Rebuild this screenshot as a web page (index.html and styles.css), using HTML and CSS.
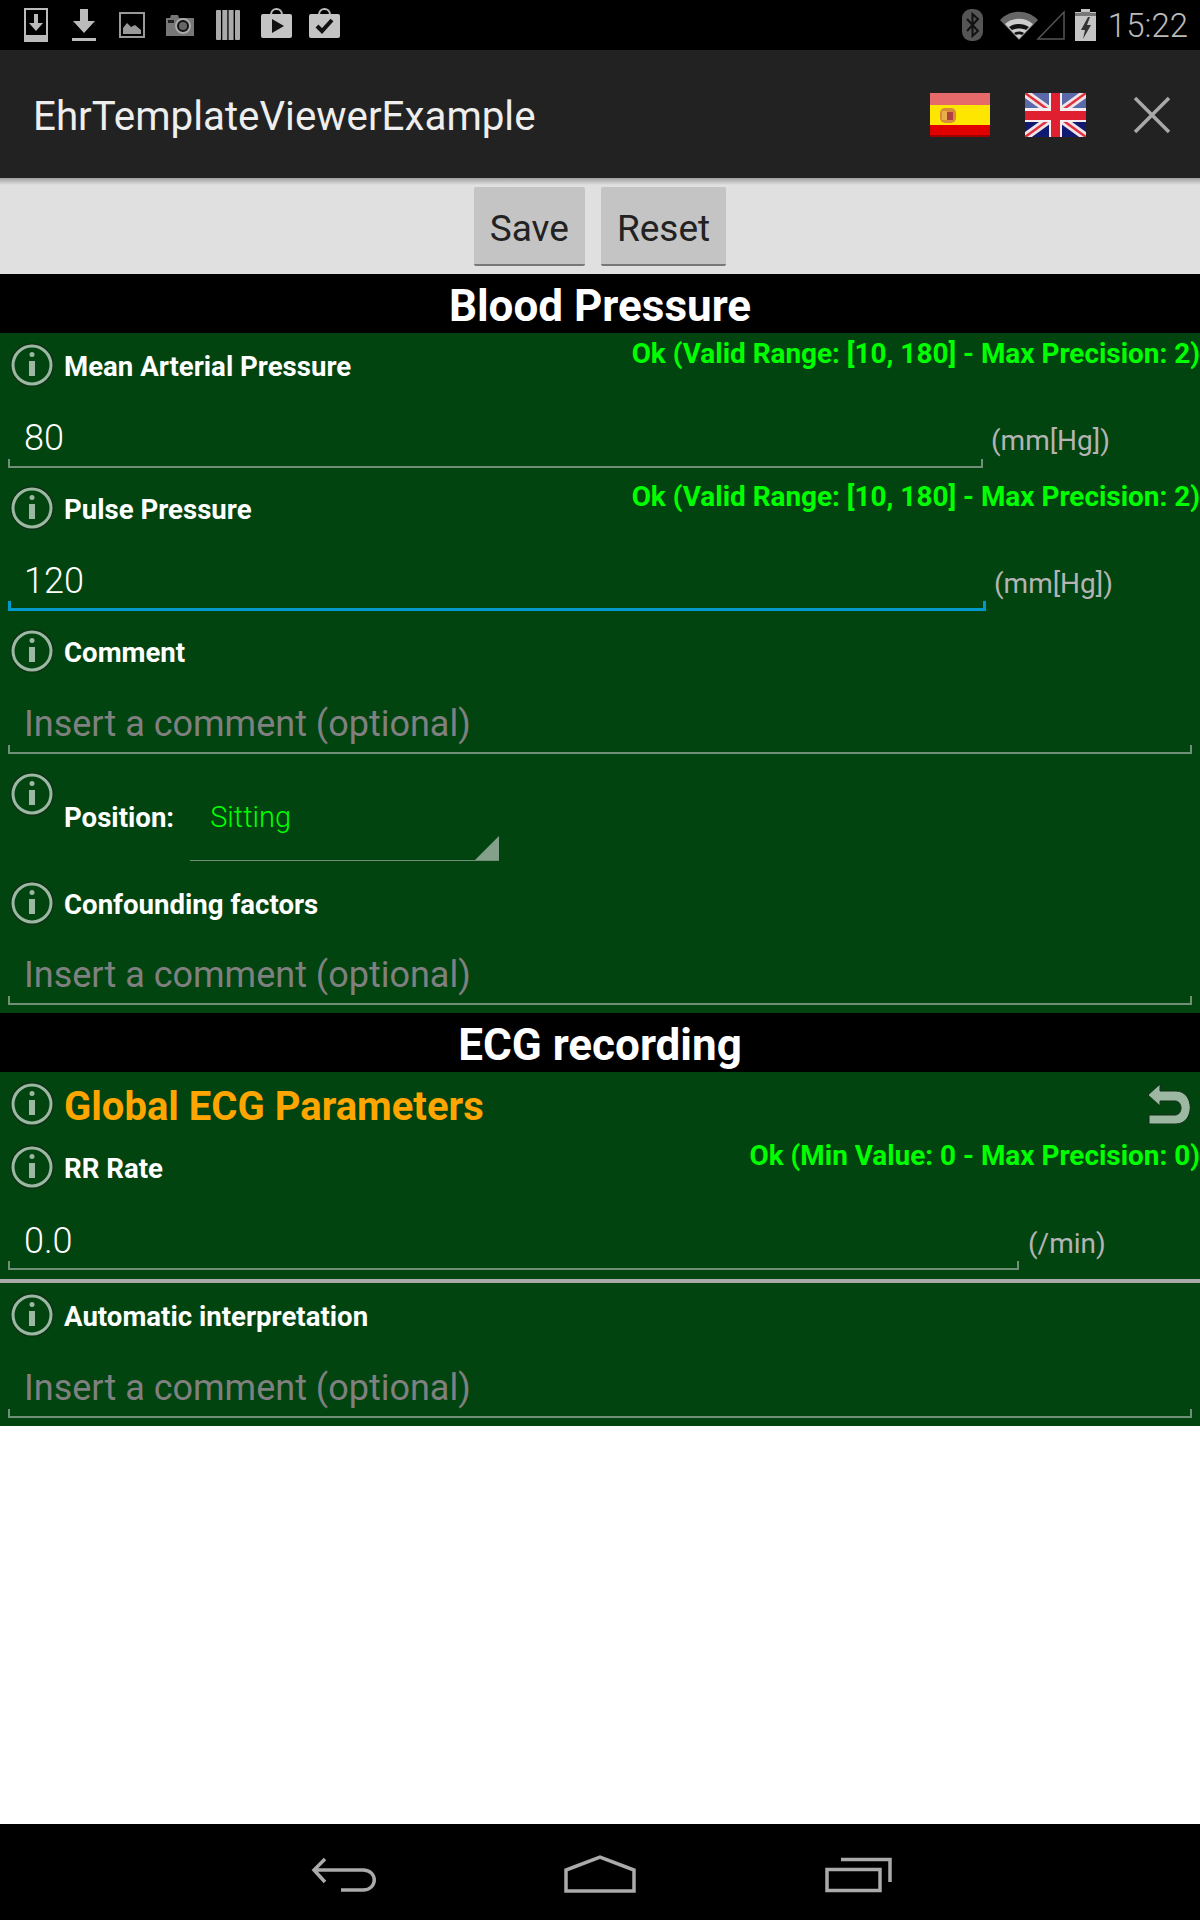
FILE: index.html
```html
<!DOCTYPE html>
<html lang="en">
<head>
  <meta charset="UTF-8" />
  <meta name="viewport" content="width=device-width, initial-scale=1.0"/>
  <title>EhrTemplateViewerExample</title>
  <link rel="stylesheet" href="styles.css">
</head>
<body>
  <svg class="defs" width="0" height="0">
    <symbol id="info" viewBox="0 0 44 44">
      <circle cx="22" cy="22" r="20.5" fill="none" stroke="#0f2f14" stroke-width="2.5"/>
      <circle cx="22" cy="22" r="19" fill="none" stroke="#9cb8a2" stroke-width="3"/>
      <circle cx="22" cy="11.500" r="2.500" fill="#9cb8a2"/>
      <rect x="19" y="18" width="6" height="15" fill="#9cb8a2"/>
    </symbol>
  </svg>

  <!-- status bar -->
  <div class="statusbar">
    <div class="status-icons">
      <svg width="24" height="34" viewBox="0 0 24 34">
        <path d="M1 1h22v32H1z" fill="none" stroke="#bbb" stroke-width="2"/>
        <rect x="1" y="27" width="22" height="6" fill="#bbb"/>
        <path d="M10 6h4v9h5l-7 8-7-8h5z" fill="#bbb"/>
      </svg>
      <svg width="24" height="32" viewBox="0 0 24 32">
        <path d="M8 0h8v12h7L12 24 1 12h7z" fill="#bbb"/>
        <rect y="29" width="24" height="3" fill="#bbb"/>
      </svg>
      <svg width="26" height="26" viewBox="0 0 26 26">
        <rect x="1" y="1" width="24" height="24" fill="none" stroke="#999" stroke-width="2"/>
        <path d="M4 22v-6l4-5 4 4 4-2 6 5v4z" fill="#999"/>
      </svg>
      <svg width="30" height="24" viewBox="0 0 30 24">
        <path d="M1 5h4l1-3h7l1 3h15v18H1z" fill="#777"/>
        <circle cx="18" cy="13" r="7" fill="#111" stroke="#aaa" stroke-width="2"/>
        <circle cx="18" cy="13" r="4" fill="#666"/>
        <rect x="3" y="7" width="6" height="3" fill="#222"/>
      </svg>
      <svg width="24" height="30" viewBox="0 0 24 30">
        <rect width="5" height="30" rx="1" fill="#aaa"/>
        <rect x="6.300" width="5" height="30" fill="#aaa"/>
        <rect x="12.600" width="5" height="30" fill="#aaa"/>
        <rect x="19" width="5" height="30" rx="1" fill="#aaa"/>
      </svg>
      <svg class="st-store" width="31" height="30" viewBox="0 0 31 30">
        <path d="M10 7c0-8 11-8 11 0" fill="none" stroke="#bbb" stroke-width="2"/>
        <rect y="6" width="31" height="24" rx="2" fill="#c4c4c4"/>
        <path d="M11 11l12 7-12 7z" fill="#111"/>
      </svg>
      <svg class="st-store" width="31" height="30" viewBox="0 0 31 30">
        <path d="M10 7c0-8 11-8 11 0" fill="none" stroke="#bbb" stroke-width="2"/>
        <rect y="6" width="31" height="24" rx="2" fill="#c4c4c4"/>
        <path d="M8 18l5 5 10-11" fill="none" stroke="#111" stroke-width="4"/>
      </svg>
    </div>
    <div class="status-right">
      <svg class="st-bt" width="21" height="32" viewBox="0 0 21 32">
        <rect width="21" height="32" rx="9" fill="#555"/>
        <path d="M5 10l11 12-5.500 5V5L16 10 5 22" fill="none" stroke="#111" stroke-width="2"/>
      </svg>
      <svg class="st-wifi" width="38" height="29" viewBox="0 0 38 29">
        <path d="M0 9C10-2 28-2 38 9L19 29z" fill="#666"/>
        <path d="M5 13c8-7 20-7 28 0L19 28z" fill="#ccc"/>
        <path d="M9 16c6-4 14-4 20 0l-3 3c-4-2-10-2-14 0zM14 22c3-2 7-2 10 0l-2 2c-2-1-4-1-6 0z" fill="#111"/>
      </svg>
      <svg class="st-signal" width="30" height="30" viewBox="0 0 30 30">
        <path d="M28 2v27H2z" fill="none" stroke="#555" stroke-width="1.500"/>
      </svg>
      <svg class="st-batt" width="21" height="32" viewBox="0 0 21 32">
        <path d="M6 0h9v3h6v29H0V3h6z" fill="#c4c4c4"/>
        <path d="M6 3h9v1h6v3H0V4h6z" fill="#777"/>
        <path d="M13 8l-7 13h4l-2 9 8-14h-4l3-8z" fill="#333"/>
      </svg>
      <span class="clock">15:22</span>
    </div>
  </div>

  <!-- action bar -->
  <div class="actionbar">
    <div class="app-title">EhrTemplateViewerExample</div>
    <div class="actions">
      <svg class="flag-es" width="60" height="44" viewBox="0 0 60 44">
        <rect width="60" height="44" fill="#e00000"/>
        <rect width="60" height="12" fill="#e66a6a"/>
        <rect y="12" width="60" height="20" fill="#ffe600"/>
        <rect x="10" y="15" width="16" height="15" rx="5" fill="#d98a3a"/>
        <rect x="12" y="18" width="5" height="9" fill="#e8b04a"/>
        <rect x="17" y="19" width="6" height="8" fill="#b04040"/>
        <rect y="42" width="60" height="2" fill="#a00000"/>
      </svg>
      <svg class="flag-uk" width="61" height="44" viewBox="0 0 61 44">
        <rect width="61" height="44" fill="#5a6aa8"/>
        <rect y="22" width="61" height="22" fill="#101a70"/>
        <path d="M0 0L61 44M61 0L0 44" stroke="#f0e4e8" stroke-width="8"/>
        <path d="M0 0L61 44M61 0L0 44" stroke="#e0303c" stroke-width="2.500"/>
        <rect x="24" width="13" height="44" fill="#f4eef0"/>
        <rect y="15" width="61" height="14" fill="#f4eef0"/>
        <rect x="26" width="9" height="44" fill="#e02030"/>
        <rect y="18" width="61" height="9" fill="#e02030"/>
      </svg>
      <svg class="close" width="38" height="38" viewBox="0 0 38 38">
        <path d="M2 2l34 34M36 2L2 36" stroke="#a8a8a8" stroke-width="3.500"/>
      </svg>
    </div>
  </div>

  <div class="toolbar">
    <button class="btn">Save</button>
    <button class="btn">Reset</button>
  </div>

  <div class="section-title">Blood Pressure</div>
  <div class="section">
    <div class="field">
      <div class="head">
        <svg class="info"><use href="#info"/></svg>
        <span class="label">Mean Arterial Pressure</span>
        <span class="status">Ok (Valid Range: [10, 180] - Max Precision: 2)</span>
      </div>
      <div class="input-row">
        <div class="input input-mean">80</div>
        <span class="unit">(mm[Hg])</span>
      </div>
    </div>
    <div class="field">
      <div class="head">
        <svg class="info"><use href="#info"/></svg>
        <span class="label">Pulse Pressure</span>
        <span class="status">Ok (Valid Range: [10, 180] - Max Precision: 2)</span>
      </div>
      <div class="input-row">
        <div class="input input-focus">120</div>
        <span class="unit">(mm[Hg])</span>
      </div>
    </div>
    <div class="field field-comment">
      <div class="head">
        <svg class="info"><use href="#info"/></svg>
        <span class="label">Comment</span>
      </div>
      <div class="input-row">
        <div class="input placeholder">Insert a comment (optional)</div>
      </div>
    </div>
    <div class="position-row">
      <svg class="info"><use href="#info"/></svg>
      <span class="label">Position:</span>
      <div class="spinner">Sitting</div>
    </div>
    <div class="field">
      <div class="head">
        <svg class="info"><use href="#info"/></svg>
        <span class="label">Confounding factors</span>
      </div>
      <div class="input-row">
        <div class="input placeholder input-short">Insert a comment (optional)</div>
      </div>
    </div>
  </div>

  <div class="section-title">ECG recording</div>
  <div class="section section-ecg">
    <div class="group-head">
      <svg class="info"><use href="#info"/></svg>
      <span class="group-title">Global ECG Parameters</span>
      <svg class="undo" width="44" height="40" viewBox="0 0 44 40">
        <path d="M1 11L13 0v7h16c19 0 19 33 0 33H2v-9h26c8 0 8-14 0-14H13v5z" fill="#9cb8a2" stroke="#0f2f14" stroke-width="1"/>
      </svg>
    </div>
    <div class="field field-rr">
      <div class="head">
        <svg class="info"><use href="#info"/></svg>
        <span class="label">RR Rate</span>
        <span class="status">Ok (Min Value: 0 - Max Precision: 0)</span>
      </div>
      <div class="input-row">
        <div class="input input-rr">0.0</div>
        <span class="unit">(/min)</span>
      </div>
    </div>
    <div class="divider"></div>
    <div class="field">
      <div class="head">
        <svg class="info"><use href="#info"/></svg>
        <span class="label">Automatic interpretation</span>
      </div>
      <div class="input-row">
        <div class="input placeholder">Insert a comment (optional)</div>
      </div>
    </div>
  </div>

  <div class="blank"></div>

  <!-- nav bar -->
  <div class="navbar">
    <svg width="66" height="36" viewBox="0 0 66 36">
      <path d="M14 2L3 13l11 12M3 13h49c15 0 15 20 0 20H30" fill="none" stroke="#aaa" stroke-width="3.500"/>
    </svg>
    <svg width="72" height="38" viewBox="0 0 72 38">
      <path d="M2 36V15L36 2l34 13v21z" fill="none" stroke="#aaa" stroke-width="3.500"/>
    </svg>
    <svg class="nav-recent" width="68" height="36" viewBox="0 0 68 36">
      <path d="M2 12.500h53v21H2z" fill="none" stroke="#aaa" stroke-width="3.500"/>
      <path d="M16 2.500h49V25" fill="none" stroke="#aaa" stroke-width="3.500"/>
    </svg>
  </div>
</body>
</html>
```

FILE: styles.css
```css
* {
  box-sizing: border-box;
}

body {
  margin: 0;
  width: 1200px;
  height: 1920px;
  display: flex;
  flex-direction: column;
  font-family: Roboto, "Noto Sans", sans-serif;
  background: #ffffff;
  overflow: hidden;
}

.defs {
  position: absolute;
}

.statusbar {
  height: 50px;
  background: #000;
  display: flex;
  align-items: center;
  justify-content: space-between;
  padding: 0 12px 0 12px;
}

.status-icons {
  display: grid;
  grid-template-columns: repeat(7, 48px);
  align-items: center;
  justify-items: center;
}

.st-store {
  margin-bottom: 4px;
}

.status-right {
  display: flex;
  align-items: center;
}

.st-wifi {
  margin-left: 17px;
}

.st-signal {
  margin-left: -2px;
}

.st-batt {
  margin-left: 9px;
}

.clock {
  margin-left: 12px;
  font-size: 33px;
  font-weight: 300;
  color: #bbb;
}

.actionbar {
  height: 128px;
  background: #222;
  display: flex;
  align-items: center;
  justify-content: space-between;
  padding: 0 29px 0 33px;
}

.app-title {
  margin-top: 5px;
  font-size: 40.300px;
  color: #eee;
}

.actions {
  display: flex;
  align-items: center;
  margin-top: 1px;
}

.flag-uk {
  margin-left: 35px;
}

.close {
  margin-left: 47px;
}

.toolbar {
  height: 96px;
  background: linear-gradient(#a0a0a0, #e0e0e0 7px);
  display: flex;
  justify-content: center;
  gap: 16px;
  padding-top: 9px;
}

.btn {
  height: 79px;
  padding: 5px 16px 0;
  background: #c4c4c4;
  border: 0;
  border-bottom: 2px solid #777;
  border-radius: 2px;
  font-family: inherit;
  font-size: 37px;
  color: #222;
}

.section-title {
  height: 59px;
  line-height: 64px;
  background: #000;
  color: #fff;
  font-size: 44px;
  font-weight: 700;
  text-align: center;
}

.section {
  height: 680px;
  background: #024410;
}

.section-ecg {
  height: 354px;
}

.blank {
  flex: 1;
}

.field {
  height: 143px;
  position: relative;
}

.field-comment {
  height: 144px;
}

.head {
  height: 64px;
  display: flex;
  align-items: center;
  padding-left: 10px;
}

.info {
  width: 44px;
  height: 44px;
  flex-shrink: 0;
}

.label {
  margin: 3px 0 0 10px;
  font-size: 27.600px;
  font-weight: 700;
  color: #fff;
}

.status {
  position: absolute;
  top: 4px;
  right: 0;
  font-size: 27.900px;
  font-weight: 700;
  color: #00ff00;
}

.input-row {
  display: flex;
  padding-left: 8px;
}

.input {
  height: 71px;
  width: 1184px;
  padding: 20px 0 0 16px;
  font-size: 36px;
  font-weight: 300;
  color: #fff;
  position: relative;
}

.input::after {
  content: "";
  position: absolute;
  left: 0;
  right: 0;
  bottom: 0;
  height: 7px;
  border: 2px solid #6f8f76;
  border-top: 0;
}

.input-mean {
  width: 975px;
}

.input-focus {
  width: 978px;
}

.input-focus::after {
  border-color: #0099cc;
  border-width: 0 3px 3px;
}

.input-rr {
  width: 1011px;
  padding-top: 21px;
}

.input-short {
  height: 70px;
  padding-top: 19px;
}

.placeholder {
  color: #808080;
  font-weight: 400;
}

.unit {
  margin: 27px 0 0 8px;
  font-size: 28px;
  color: #b4b4b4;
}

.input-rr + .unit {
  margin-top: 28px;
  margin-left: 9px;
}

.position-row {
  height: 108px;
  display: flex;
  padding: 9px 0 0 10px;
}

.position-row .label {
  margin-top: 29px;
}

.spinner {
  width: 309px;
  height: 89px;
  margin-left: 16px;
  padding: 28px 0 0 20px;
  font-size: 29px;
  font-weight: 300;
  color: #00ff00;
  position: relative;
  border-bottom: 1px solid #6f8f76;
}

.spinner::after {
  content: "";
  position: absolute;
  right: 0;
  bottom: 0;
  border-style: solid;
  border-width: 0 0 24px 24px;
  border-color: transparent transparent #84a08a transparent;
}

.group-head {
  height: 63px;
  display: flex;
  align-items: center;
  padding: 0 9px 0 10px;
}

.group-title {
  flex: 1;
  margin: 6px 0 0 10px;
  font-size: 40px;
  font-weight: 700;
  color: #ffa500;
}

.field-rr {
  height: 144px;
}

.divider {
  height: 4px;
  background: #aaa;
}

.navbar {
  height: 96px;
  background: #000;
  display: flex;
  align-items: flex-end;
  gap: 187px;
  padding: 0 0 27px 311px;
}

.nav-recent {
  margin-left: 2px;
}
```
